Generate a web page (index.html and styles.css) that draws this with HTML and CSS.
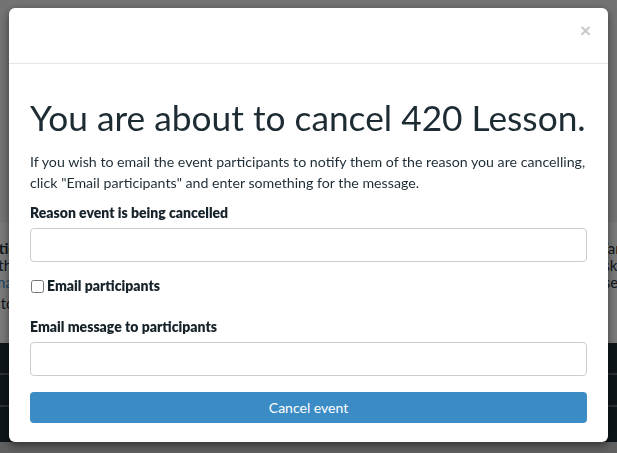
FILE: index.html
```html
<!DOCTYPE html>
<html lang="en">
<head>
    <meta charset="UTF-8">
    <meta name="viewport" content="width=device-width, initial-scale=1.0">
    <title>Cancel event</title>
    <link rel="stylesheet" href="styles.css">
</head>
<body>

    <!-- page behind the modal -->
    <div class="page">
        <div class="page-top"></div>
        <div class="page-text">
            <div class="col col-left">
                <p><b>Frequently asked question</b></p>
                <p>What happens to the</p>
                <p><a href="#">Read the email</a></p>
                <p>The instructor</p>
            </div>
            <div class="col col-right">
                <p>Want to talk to t</p>
                <p>Ask them on th</p>
                <p>Use the f</p>
            </div>
        </div>
        <div class="page-table">
            <div class="row"></div>
            <div class="row"></div>
            <div class="row"></div>
        </div>
        <div class="page-bottom"></div>
    </div>

    <div class="backdrop"></div>

    <!-- Modal -->
    <div class="modal">
        <div class="modal-header">
            <button class="close">&times;</button>
        </div>
        <form class="modal-body">
            <h1>You are about to cancel 420 Lesson.</h1>
            <p class="intro">If you wish to email the event participants to notify them of the reason you are cancelling, click "Email participants" and enter something for the message.</p>

            <label class="field-label" for="reason">Reason event is being cancelled</label>
            <input class="input input-first" id="reason" type="text">

            <label class="check">
                <input type="checkbox">
                <span>Email participants</span>
            </label>

            <label class="field-label" for="message">Email message to participants</label>
            <input class="input" id="message" type="text">

            <button class="btn-primary" type="button">Cancel event</button>
        </form>
    </div>

</body>
</html>
```

FILE: styles.css
```css
* {
    margin: 0;
    padding: 0;
    box-sizing: border-box;
}

body {
    font-family: Lato, "Open Sans", sans-serif;
    color: #1f2d36;
    overflow: hidden;
    height: 453px;
}

/* Page behind */
.page-top {
    height: 222px;
    background: #e6e6e6;
}

.page-text {
    height: 121px;
    background: #f4f4f4;
    display: flex;
    justify-content: space-between;
    padding-top: 18px;
    font-size: 15px;
    line-height: 17px;
    color: #1f2d36;
    overflow: hidden;
}

.col p {
    white-space: nowrap;
}

.col-left {
    margin-left: -150px;
    text-align: right;
    width: 170px;
}

.col-left p:nth-child(4) {
    margin-top: 4px;
}

.col-left a {
    color: #3b8cc4;
    text-decoration: none;
}

.col-right {
    width: 40px;
    padding-left: 16px;
}

.page-table {
    height: 99px;
    background: #1c2c33;
}

.page-table .row {
    height: 32px;
    border-bottom: 2px solid #5a6166;
}

.page-table .row:last-child {
    border-bottom: none;
}

.page-bottom {
    height: 20px;
    background: #c0c0c0;
}

.backdrop {
    position: fixed;
    top: 0;
    left: 0;
    width: 100%;
    height: 100%;
    background: rgba(0, 0, 0, 0.5);
}

/* Modal */
.modal {
    position: fixed;
    top: 8px;
    left: 9px;
    width: 599px;
    height: 434px;
    background: #fff;
    border-radius: 6px;
    box-shadow: 0 3px 9px rgba(0, 0, 0, 0.5);
}

.modal-header {
    height: 56px;
    border-bottom: 1px solid #e5e5e5;
    display: flex;
    justify-content: flex-end;
    align-items: flex-start;
    padding: 13px 17px 0 0;
}

.close {
    background: none;
    border: none;
    color: #cacaca;
    font-size: 19px;
    font-weight: bold;
    line-height: 20px;
    cursor: pointer;
    font-family: "Liberation Sans", Arial, sans-serif;
}

.modal-body {
    display: flex;
    flex-direction: column;
    padding: 32px 21px 20px;
}

.modal-body h1 {
    font-size: 35.3px;
    font-weight: 400;
    line-height: 44px;
    margin-bottom: 11px;
    white-space: nowrap;
    color: #1d2b33;
}

.intro {
    font-size: 14.2px;
    line-height: 21px;
    margin-bottom: 10px;
}

.field-label {
    font-size: 14px;
    font-weight: 800;
    line-height: 20px;
    margin-bottom: 5px;
    color: #17232a;
}

.input {
    height: 34px;
    border: 1px solid #ccc;
    border-radius: 4px;
    margin-bottom: 16px;
    font-size: 14px;
    padding: 6px 12px;
}

.input-first {
    margin-bottom: 14px;
}

.check {
    display: flex;
    align-items: center;
    gap: 3px;
    font-size: 14px;
    font-weight: 800;
    line-height: 20px;
    margin-bottom: 21px;
    color: #17232a;
}

.check input {
    width: 13px;
    height: 13px;
    margin: 0 0 0 1px;
}

.btn-primary {
    height: 31px;
    background: #3b8cc5;
    color: #fff;
    border: none;
    border-radius: 4px;
    font-family: inherit;
    font-size: 14px;
    cursor: pointer;
}
```
